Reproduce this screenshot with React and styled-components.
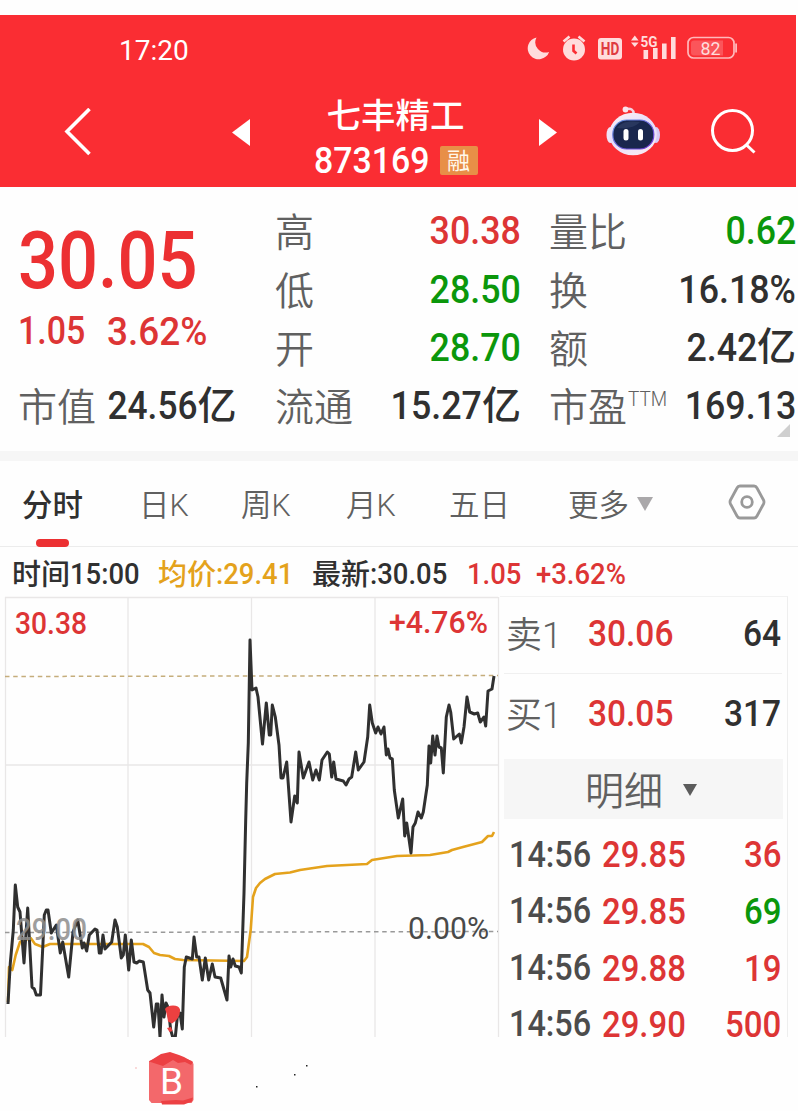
import React from "react";
import styled, { createGlobalStyle } from "styled-components";

const C = {
  header: "#fa2d33",
  up: "#dd3535",
  strong: "#ec3032",
  down: "#0b970b",
  ink: "#303030",
  time: "#4c4c4c",
  label: "#606060",
  gold: "#e4a21c",
};

const Global = createGlobalStyle`
  * { box-sizing: border-box; }
  body {
    margin: 0;
    background: #fefefe;
    font-family: Roboto, "Noto Sans CJK SC", sans-serif;
  }
`;

const Page = styled.main`
  width: 798px;
  height: 1111px;
  padding-top: 15px;
  overflow: hidden;
  background: #fefefe;
`;

const Text = styled.span`
  display: block;
  white-space: nowrap;
  line-height: 1.2;
  font-size: ${(p) => p.$size}px;
  font-weight: ${(p) => p.$weight || 500};
  color: ${(p) => p.$color || C.ink};
  letter-spacing: ${(p) => p.$track || 0}em;
`;

/* Condensed numerals, anchored at their left or right edge. */
const Figure = styled(Text)`
  transform: scaleX(${(p) => p.$narrow || 0.905});
  transform-origin: ${(p) => p.$anchor || "left"} center;
`;

const Label = styled(Text)`
  font-weight: ${(p) => p.$weight || 350};
  color: ${(p) => p.$color || C.label};
  padding-top: 5px;
`;

/* ---------- header ---------- */

const Header = styled.header`
  width: 796px;
  height: 172px;
  background: ${C.header};
`;

const StatusBar = styled.div`
  display: flex;
  align-items: center;
  justify-content: space-between;
  height: 66px;
  padding: 5px 58px 0 119px;
`;

const StatusIcons = styled.svg`
  display: block;
  width: 214px;
  height: 34px;
  margin-top: -6px;
`;

const NavBar = styled.div`
  display: grid;
  grid-template-columns: 64px 168px 81px 226px 67px 105px auto;
  align-items: center;
  height: 102px;
  svg { display: block; }
`;

const TitleBlock = styled.div`
  display: flex;
  flex-direction: column;
  width: 165px;
  padding-top: 15px;
  align-items: center;
`;

const CodeLine = styled.div`
  display: flex;
  align-items: center;
  justify-content: space-between;
  width: 164px;
  margin-top: 1px;
`;

const MarginTag = styled.span`
  width: 38px;
  height: 29px;
  border-radius: 2px;
  background: #e88f47;
  color: #fff8ea;
  font-size: 23px;
  line-height: 31px;
  text-align: center;
`;

/* ---------- quote summary ---------- */

const Quote = styled.section`
  display: grid;
  grid-template-columns: 257px 246px 28px 247px;
  height: 264px;
  padding: 15px 0 0 18px;
`;

const PriceColumn = styled.div`
  display: flex;
  flex-direction: column;
`;

const LastPrice = styled.div`
  height: 106px;
  padding-top: 11px;
`;

const Changes = styled.div`
  display: grid;
  grid-template-columns: 89px auto;
  align-items: center;
  height: 40px;
  margin-bottom: 29px;
`;

const StatColumn = styled.div`
  display: flex;
  flex-direction: column;
  grid-column: ${(p) => p.$col};
`;

const Stat = styled.div`
  display: flex;
  position: relative;
  align-items: center;
  justify-content: ${(p) => (p.$tight ? "flex-start" : "space-between")};
  gap: ${(p) => (p.$tight ? "2px" : "0")};
  height: 58.3px;
`;

const LabelGroup = styled.div`
  display: flex;
  align-items: flex-start;
  sup {
    font-size: 21px;
    font-weight: 300;
    line-height: 1;
    margin: 9px 0 0 1px;
    color: ${C.label};
    transform: scaleX(0.9);
    transform-origin: left center;
  }
`;

const ValueGroup = styled.div`
  display: flex;
  align-items: center;
`;

const Corner = styled.i`
  position: absolute;
  right: 6px;
  bottom: -2px;
  border-left: 13px solid transparent;
  border-bottom: 13px solid #cfcfcf;
`;

const Divider = styled.div`
  height: 10px;
  background: #f6f6f6;
`;

/* ---------- tabs ---------- */

const Tabs = styled.nav`
  display: grid;
  grid-template-columns: 117px 102px 105px 103px 119px 160px auto;
  align-items: center;
  height: 86px;
  padding-left: 22px;
  border-bottom: 1px solid #ececec;
  > svg { display: block; margin-top: -3px; }
`;

const Tab = styled.div`
  display: flex;
  position: relative;
  align-items: center;
  height: 100%;
  gap: 8px;
`;

const Underline = styled.i`
  position: absolute;
  left: 14px;
  bottom: -1px;
  width: 33px;
  height: 8px;
  border-radius: 4px;
  background: ${C.strong};
`;

const Down = styled.i`
  border: ${(p) => p.$w / 2}px solid transparent;
  border-top: ${(p) => p.$h}px solid ${(p) => p.$color};
  border-bottom: 0;
`;

const InfoLine = styled.div`
  display: grid;
  grid-template-columns: 146px 154px 155px 69px auto;
  align-items: center;
  height: 49px;
  padding: 6px 0 0 12px;
`;

const InfoPair = styled.div`
  display: flex;
  align-items: center;
`;

const InfoLabel = styled(Text)`
  padding-top: 2px;
`;

/* ---------- chart and order book ---------- */

const Body = styled.div`
  display: flex;
  height: 441px;
`;

const Chart = styled.svg`
  display: block;
  flex: none;
  width: 500px;
  height: 441px;
`;

const ChartLabel = styled.text.attrs({ lengthAdjust: "spacingAndGlyphs" })`
  font-family: Roboto, sans-serif;
  font-size: 30.5px;
  font-weight: ${(p) => p.$weight || 500};
  fill: ${(p) => p.$color};
`;

const Book = styled.aside`
  width: 288px;
  height: 441px;
  padding: 0 5px 0 4px;
  border-right: 1px solid #eeeeee;
  border-top: 1px solid #f2f2f2;
`;

const Order = styled.div`
  display: grid;
  grid-template-columns: 82px 1fr auto;
  align-items: center;
  height: ${(p) => p.$h}px;
  padding: 0 1px ${(p) => (p.$line ? 1 : 4)}px 2px;
  border-bottom: ${(p) => (p.$line ? "1px solid #f0f0f0" : "0")};
`;

const DetailBar = styled.div`
  display: flex;
  align-items: center;
  justify-content: center;
  gap: 20px;
  width: 279px;
  height: 60px;
  padding: 2px 5px 0 0;
  background: #f6f6f6;
`;

const Trades = styled.div`
  padding-top: 7px;
`;

const Trade = styled.div`
  display: grid;
  grid-template-columns: 93px 1fr auto;
  align-items: center;
  height: 56.6px;
  padding: 2px 1px 0 5px;
`;

const Footer = styled.svg`
  display: block;
  width: 798px;
  height: 73px;
`;

const PRICE =
  "8,1004 10.3,963 13.3,930 15.3,885 17.7,907 20,912 24,963 27.7,908 32,987 34.3,989 36.3,995 40.5,995 44.3,915 46.3,910 48,910 51.3,933 56.3,925 60.3,953 62.7,942 68.7,977 73,932 77.7,920 82.3,948 84,943 86.7,951 89.3,935 95,929 97,930 99.3,953 101,953 103,935 105,949 111.7,942 115,920 117.3,927 121.3,958 123.3,955 125.3,935 128.7,970 131.3,940 134,962 136.7,963 139.3,961 143.3,962 147.7,990 150,993 153.7,1027 156.3,1004 158,1004 160,1037 162,995 164,1017 166,1003 168.3,1008 170.7,1030 172.7,1037 175.3,1037 177.3,1017 180,1013 182.3,1029 184.3,967 186.3,957 192.3,959 194,937 196.7,957 199,957 202.3,980 205.3,958 208.7,980 212.3,964 215,977 220.7,978 227,1000 229,956 230.7,967 233,959 235.3,966 239,967 241.3,973 244,893 245.7,820 246.7,783 248.3,743 250,640 252,690 256,688 258,697 262.5,744 266.3,703 269.3,735 270.7,735 272.3,705 275.3,717 279,745 281,778 283,778 286.7,762 291,822 294.7,796 297.3,803 299,752 303.3,778 309,762 312.7,780 316,770 319.3,780 322,760 327.3,752 329.3,754 331.7,777 333.7,762 336,779 343.3,781 346,785 349,779 351.7,777 355.7,752 358.3,770 364,762 367.7,737 369.7,705 372.3,723 375.7,733 378,727 381,734 384,727 386.3,755 388,749 390,758 392.3,759 394.3,790 398.3,818 402.7,799 404.7,836 406.7,823 411,853 413,827 415.3,823 418,812 421.3,818 423.3,812 427.3,785 429,746 430.7,763 432.7,736 435,755 437,736 439,747 441.3,748 443.3,773 446.3,717 449,705 450.7,712 453.7,739 459.3,734 461.3,743 464,727 467,697 469.7,712 474.3,714 477.7,713 480.3,722 484,717 485.7,726 488,691 492,689 494,676";

const AVERAGE =
  "8,1002 9,967 12.3,970 15.7,955 20,942 30.7,938 35,944 42.7,947 50,944 143,944 149,947 154,953 160,955 169,956 175,959 183,960 244,961 247,957 250.7,930 253,897 256,888 260,883 265,879 275,874 290,872.5 300,870 327,866 367,864 372,860 397,856 430,855 448,852 452,850 463,847 482,842 488,836 492,836 494,832";

const RANGE = [
  { label: "高", value: "30.38", color: C.up },
  { label: "低", value: "28.50", color: C.down },
  { label: "开", value: "28.70", color: C.down },
  { label: "流通", value: "15.27", unit: "亿" },
];
const RATIOS = [
  { label: "量比", value: "0.62", color: C.down },
  { label: "换", value: "16.18%" },
  { label: "额", value: "2.42", unit: "亿" },
  { label: "市盈", sup: "TTM", value: "169.13" },
];
const TRADES = [
  ["29.85", "36", C.up],
  ["29.85", "69", C.down],
  ["29.88", "19", C.up],
  ["29.90", "500", C.up],
];

function StatRow({ item }) {
  return (
    <Stat>
      <LabelGroup>
        <Label $size={39}>{item.label}</Label>
        {item.sup && <sup>{item.sup}</sup>}
      </LabelGroup>
      <ValueGroup>
        <Figure $size={39.5} $color={item.color} $anchor="right">{item.value}</Figure>
        {item.unit && <Text $size={39}>{item.unit}</Text>}
      </ValueGroup>
      {item.sup && <Corner />}
    </Stat>
  );
}

function Info({ label, value, color }) {
  return (
    <InfoPair>
      {label && <InfoLabel $size={29} $color={color}>{label}</InfoLabel>}
      <Figure $size={29.5} $color={color} $narrow={0.93}>{value}</Figure>
    </InfoPair>
  );
}

function StatusGlyphs() {
  return (
    <StatusIcons viewBox="524 31 214 34" fill="#ffdcdc">
      <path d="M536.5 37.5a11 11 0 1 0 12.6 14.4A10.3 10.3 0 0 1 536.5 37.5Z" />
      <circle cx="574" cy="49.5" r="11" />
      <path d="M563.5 41.5l6-5M584.5 41.5l-6-5" stroke="#ffdcdc" strokeWidth="2.6" fill="none" />
      <path d="M573.5 44.5v6.3l3 2.6" stroke={C.header} strokeWidth="2.6" fill="none" />
      <rect x="598" y="38" width="24" height="21.5" rx="3" />
      <text x="610" y="55.3" textAnchor="middle" fontSize="18" fontWeight="700" fill="#df3a40" textLength="18.5" lengthAdjust="spacingAndGlyphs">HD</text>
      <path d="M631 40.5l3.8-5 3.8 5ZM631 42.5l3.8 4.5 3.8-4.5Z" />
      <text x="640.5" y="46.8" fontSize="15.5" fontWeight="700" textLength="17" lengthAdjust="spacingAndGlyphs">5G</text>
      <rect x="643.5" y="50" width="4.6" height="9" />
      <rect x="653" y="48" width="4.6" height="11" />
      <rect x="662" y="43.5" width="4.6" height="15.5" />
      <rect x="671" y="37" width="4.6" height="22" />
      <rect x="688" y="37.5" width="46" height="20.5" rx="5.5" fill="none" stroke="#ffb9bb" strokeWidth="1.7" />
      <path d="M694 40.5h29v15h-29a3 3 0 0 1-3-3v-9a3 3 0 0 1 3-3Z" fill="#fb555a" />
      <rect x="735.2" y="43.5" width="1.8" height="9" fill="#ffb9bb" />
      <text x="710.5" y="54.8" textAnchor="middle" fontSize="19" textLength="20" lengthAdjust="spacingAndGlyphs">82</text>
    </StatusIcons>
  );
}

function Robot() {
  return (
    <svg width="54" height="52" viewBox="606 106 54 52">
      <defs>
        <linearGradient id="shell" x1="0" y1="0" x2="0.5" y2="1">
          <stop offset="0" stopColor="#fff2f3" />
          <stop offset="0.55" stopColor="#e4dcfb" />
          <stop offset="1" stopColor="#f6e8f4" />
        </linearGradient>
        <linearGradient id="rim" x1="0" y1="0" x2="1" y2="1">
          <stop offset="0" stopColor="#6b9fe8" />
          <stop offset="1" stopColor="#6d30d2" />
        </linearGradient>
      </defs>
      <path d="M626 109c5-1 7.6 1 7.6 4.5" fill="none" stroke="#f3d4e2" strokeWidth="2.4" />
      <circle cx="625.5" cy="109.5" r="2.9" fill="#fbe4ec" />
      <ellipse cx="610.5" cy="135" rx="4" ry="8" fill="#efe3f7" />
      <ellipse cx="656" cy="135" rx="4" ry="8" fill="#d8c9f6" />
      <ellipse cx="633" cy="134" rx="23.8" ry="21.3" fill="url(#shell)" />
      <rect x="612.8" y="120" width="41" height="29" rx="14" fill="#19264d" stroke="url(#rim)" strokeWidth="1.2" />
      <path d="M617 128c4-6 12-7.5 23-6-5 5-12 7-23 6Z" fill="#33436a" opacity="0.6" />
      <rect x="623.5" y="129" width="5" height="11.5" rx="2.5" fill="#fff" />
      <rect x="638" y="129" width="5" height="11.5" rx="2.5" fill="#fff" />
    </svg>
  );
}

export default function App() {
  return (
    <Page>
      <Global />
      <Header>
        <StatusBar>
          <Text $size={28} $weight={450} $color="#fff">17:20</Text>
          <StatusGlyphs />
        </StatusBar>
        <NavBar>
          <span />
          <svg width="28" height="48" viewBox="0 0 28 48" fill="none" stroke="#fff" strokeWidth="3.6">
            <path d="M25.5 1 3 23.5 25.5 46" />
          </svg>
          <svg width="19" height="27" viewBox="0 0 19 27"><path d="M18 0v27L0 13.5Z" fill="#fff" /></svg>
          <TitleBlock>
            <Text $size={34.5} $color="#fff">七丰精工</Text>
            <CodeLine>
              <Figure $size={37} $color="#fff" $narrow={0.915}>873169</Figure>
              <MarginTag>融</MarginTag>
            </CodeLine>
          </TitleBlock>
          <svg width="19" height="27" viewBox="0 0 19 27"><path d="M0 0v27L18 13.5Z" fill="#fff" /></svg>
          <Robot />
          <svg width="46" height="46" viewBox="0 0 46 46" fill="none" stroke="#fff" strokeWidth="3">
            <circle cx="21.5" cy="21.5" r="20" />
            <path d="M35.5 36 43.5 43.5" />
          </svg>
        </NavBar>
      </Header>

      <Quote>
        <PriceColumn>
          <LastPrice>
            <Figure $size={80} $color={C.strong} $narrow={0.88}>30.05</Figure>
          </LastPrice>
          <Changes>
            <Figure $size={39} $color={C.up} $narrow={0.87}>1.05</Figure>
            <Figure $size={39.5} $color={C.up} $narrow={0.935}>3.62%</Figure>
          </Changes>
          <Stat $tight>
            <Label $size={39}>市值</Label>
            <ValueGroup>
              <Figure $size={39} $anchor="right">24.56</Figure>
              <Text $size={39}>亿</Text>
            </ValueGroup>
          </Stat>
        </PriceColumn>
        <StatColumn $col={2}>{RANGE.map((r) => <StatRow key={r.label} item={r} />)}</StatColumn>
        <StatColumn $col={4}>{RATIOS.map((r) => <StatRow key={r.label} item={r} />)}</StatColumn>
      </Quote>
      <Divider />

      <Tabs>
        <Tab><Label $size={30.5} $weight={500} $color={C.ink}>分时</Label><Underline /></Tab>
        {["日K", "周K", "月K", "五日"].map((t) => (
          <Tab key={t}><Label $size={30.5}>{t}</Label></Tab>
        ))}
        <Tab>
          <Label $size={30.5}>更多</Label>
          <Down $w={16} $h={14} $color="#aaa8aa" />
        </Tab>
        <svg width="38" height="36" viewBox="0 0 38 36" fill="none" stroke="#999" strokeWidth="2.8" strokeLinejoin="round">
          <path d="M12 2H26Q28 2 29 4L35.5 16Q36.5 18 35.5 20L29 32Q28 34 26 34H12Q10 34 9 32L2.5 20Q1.5 18 2.5 16L9 4Q10 2 12 2Z" />
          <circle cx="19" cy="18" r="5.3" />
        </svg>
      </Tabs>

      <InfoLine>
        <Info label="时间" value="15:00" />
        <Info label="均价" value=":29.41" color={C.gold} />
        <Info label="最新" value=":30.05" />
        <Info value="1.05" color={C.up} />
        <Info value="+3.62%" color={C.up} />
      </InfoLine>

      <Body>
        <Chart viewBox="0 596 500 441">
          <g stroke="#e9e7e7" strokeWidth="1.3" fill="none">
            <path d="M5 597.5H498M6 765H498" />
            <path d="M5.5 597V1037M128 597V1037M251.5 597V1037M375 597V1037M498.5 597V1037" />
          </g>
          <path d="M5 676.5 498 675.5" stroke="#c5ad7b" strokeWidth="1.5" strokeDasharray="4.5 3.7" />
          <path d="M5 932.5 498 931.5" stroke="#999" strokeWidth="1.5" strokeDasharray="4.5 3.7" />
          <polyline points={AVERAGE} fill="none" stroke={C.gold} strokeWidth="2.6" strokeLinejoin="round" />
          <polyline points={PRICE} fill="none" stroke={C.ink} strokeWidth="3" strokeLinejoin="round" />
          <path d="M165 1009q2-3.5 8-3.5 6 0 7 4 .5 6-4 11l-4 3-4-2q-1-8-3-12.5ZM167 1028l4-1 1.5 4-3 1Z" fill="#ed4040" />
          <ChartLabel x="15" y="634" $color={C.up} textLength="72">30.38</ChartLabel>
          <ChartLabel x="389" y="632.5" $color={C.up} textLength="99">+4.76%</ChartLabel>
          <ChartLabel x="16" y="940" $color="#8e8e8e" $weight={500} opacity="0.85" textLength="71">29.00</ChartLabel>
          <ChartLabel x="408" y="938.5" $color="#4a4a4a" $weight={400} textLength="81">0.00%</ChartLabel>
        </Chart>
        <Book>
          <Order $h={77} $line>
            <Label $size={36}>卖1</Label>
            <Figure $size={37} $color={C.up}>30.06</Figure>
            <Figure $size={37} $anchor="right">64</Figure>
          </Order>
          <Order $h={85}>
            <Label $size={36}>买1</Label>
            <Figure $size={37} $color={C.up}>30.05</Figure>
            <Figure $size={37} $anchor="right">317</Figure>
          </Order>
          <DetailBar>
            <Label $size={39}>明细</Label>
            <Down $w={15} $h={12} $color="#5c5c5c" />
          </DetailBar>
          <Trades>
            {TRADES.map(([price, volume, color], i) => (
              <Trade key={i}>
                <Figure $size={36} $color={C.time} $narrow={0.9}>14:56</Figure>
                <Figure $size={36.5} $color={C.up} $narrow={0.9}>{price}</Figure>
                <Figure $size={36.5} $color={color} $anchor="right">{volume}</Figure>
              </Trade>
            ))}
          </Trades>
        </Book>
      </Body>

      <Footer viewBox="0 1038 798 73">
        <path d="M149 1062l21-8 22 8 1.5 3v36l-2 3h-40l-2.5-3Z" fill="#f3686b" />
        <path d="M149 1062.5 161 1055l9-2 9 3 5 2 9 5-2 3-6-3-7 1-5-3-10 6Z M161 1102l15-1 7 .5 10-3-1 4-8 3h-22Z" fill="#ec4043" />
        <text x="171.5" y="1094.5" textAnchor="middle" fontFamily="Roboto, sans-serif" fontSize="37" fill="#fff">B</text>
        <path d="M256 1087h1.500v1.500h-1.500ZM294 1075h1.500v1.500h-1.500ZM306 1066h1.500v1.500h-1.500Z" fill="#222" />
        <path d="M136 1068v2" stroke="#f5b5b5" />
      </Footer>
    </Page>
  );
}
